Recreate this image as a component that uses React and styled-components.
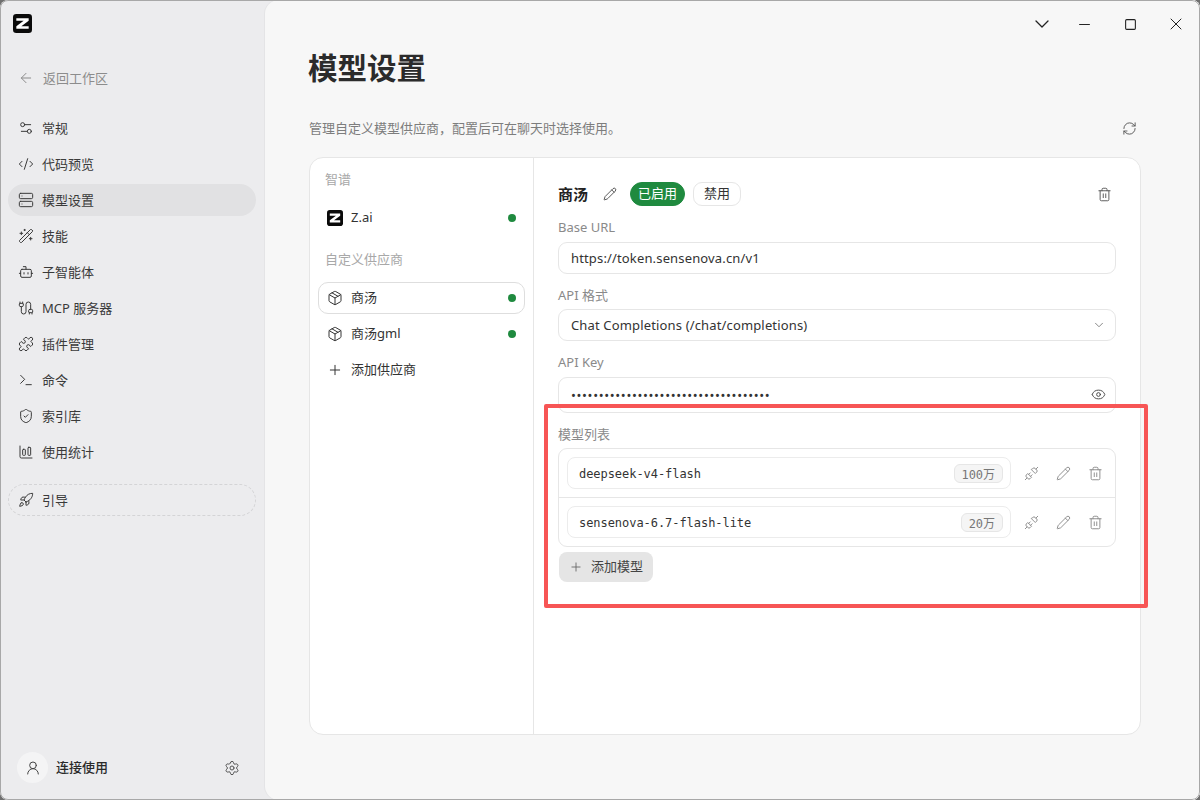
import React from 'react'
import styled, { createGlobalStyle } from 'styled-components'
import {
  ArrowLeft, Settings2, CodeXml, Server, WandSparkles, Bot, Cable, Puzzle, Terminal,
  ShieldCheck, ChartColumnBig, Rocket, UserRound, Settings, ChevronDown, Minus, Square, X,
  RefreshCw, Package, Plus, Pencil, Trash2, Eye, Unplug,
} from 'lucide-react'

const SANS = `"Noto Sans", "Noto Sans CJK SC", sans-serif`
const MONO = `"DejaVu Sans Mono", "Noto Sans CJK SC", monospace`

const GlobalStyle = createGlobalStyle`
  html, body { margin: 0; padding: 0; background: #6f6f6f; }
  * { box-sizing: border-box; }
  body { font-family: ${SANS}; font-size: 13px; color: #333; }
`

const Frame = styled.div`
  position: relative;
  display: flex;
  width: 1200px;
  height: 800px;
  overflow: hidden;
  border-radius: 8px;
  background: #ececee;
  &::after {
    content: '';
    position: absolute;
    inset: 0;
    border: 1px solid #a8a8a8;
    border-radius: 8px;
    pointer-events: none;
  }
`

const Sidebar = styled.aside`
  display: flex;
  flex-direction: column;
  flex: none;
  width: 265px;
  padding: 14px 9px 17px 8px;
`

const Logo = styled.svg`
  display: block;
  flex: none;
  width: ${p => p.$size}px;
  height: ${p => p.$size}px;
`

const LogoSlot = styled.div`
  height: 48px;
  padding-left: 5px;
`

// text sits a little high in its row in the reference
const Label = styled.span`
  padding-bottom: 2px;
`

const BackRow = styled.div`
  display: flex;
  align-items: center;
  gap: 9px;
  height: 32px;
  padding-left: 10px;
  color: #8c8c8c;
  margin-bottom: 18px;
`

const Nav = styled.nav`
  display: flex;
  flex-direction: column;
  gap: 4px;
`

const NavItem = styled.div`
  display: flex;
  align-items: center;
  gap: 8px;
  height: 32px;
  padding-left: 10px;
  border-radius: 16px;
  color: #3a3a3a;
  background: ${p => (p.$active ? '#e1e1e3' : 'transparent')};
`

const GuideItem = styled(NavItem)`
  margin-top: 16px;
  border: 1px dashed #d4d4d6;
  padding-left: 9px;
  height: 32px;
`

const UserBar = styled.div`
  display: flex;
  align-items: center;
  margin-top: auto;
  padding: 0 16px 0 9px;
`

const Avatar = styled.div`
  display: flex;
  align-items: center;
  justify-content: center;
  width: 31px;
  height: 31px;
  border-radius: 50%;
  background: #f4f4f5;
  color: #444;
`

const UserName = styled(Label)`
  margin-left: 8px;
  flex: 1;
  font-weight: 500;
  color: #2a2a2a;
`

const Main = styled.main`
  display: flex;
  flex-direction: column;
  flex: 1;
  min-width: 0;
  padding: 0 59px 65px 44px;
  background: #f7f7f7;
  border-radius: 14px 0 0 14px;
  box-shadow: -1px 0 0 #e4e4e6;
`

const TitleBar = styled.div`
  display: flex;
  align-items: center;
  justify-content: flex-end;
  height: 46px;
  margin-right: -59px;
  padding: 2px 1px 0 0;
  color: #222;
`

const WinButton = styled.div`
  display: flex;
  align-items: center;
  justify-content: center;
  width: ${p => p.$w || 46}px;
  height: 44px;
`

const Title = styled.h1`
  margin: 0 0 0 -1px;
  font-size: 29.5px;
  line-height: 44px;
  font-weight: 700;
  color: #2b2b2b;
`

const SubRow = styled.div`
  display: flex;
  align-items: center;
  justify-content: space-between;
  height: 20px;
  margin-top: 28px;
  padding-right: 4px;
  color: #7d7d7d;
`

const Card = styled.section`
  display: flex;
  flex: 1;
  margin-top: 19px;
  background: #fff;
  border: 1px solid #e6e6e6;
  border-radius: 14px;
  overflow: hidden;
`

const ProviderCol = styled.div`
  flex: none;
  width: 224px;
  padding: 12px 8px;
  border-right: 1px solid #e6e6e6;
`

const GroupLabel = styled.div`
  padding-left: 7px;
  line-height: 19.5px;
  color: #a8a8a8;
  margin-bottom: ${p => p.$gap}px;
  margin-top: ${p => p.$top || 0}px;
`

const ProviderRow = styled.div`
  display: flex;
  align-items: center;
  gap: 8px;
  height: 32px;
  padding: 0 8px;
  border-radius: 10px;
  color: #333;
  border: 1px solid ${p => (p.$active ? '#dedede' : 'transparent')};
`

const ProviderName = styled(Label)`
  flex: 1;
`

const ProviderList = styled.div`
  display: flex;
  flex-direction: column;
  gap: 4px;
  ${ProviderName} {
    padding-bottom: 4px;
  }
`

const Dot = styled.span`
  width: 8px;
  height: 8px;
  border-radius: 50%;
  background: #1f8a3f;
`

const DetailCol = styled.div`
  flex: 1;
  min-width: 0;
  padding: 24px 24px 0;
`

const DetailHead = styled.div`
  display: flex;
  align-items: center;
  height: 24px;
  margin-bottom: 12px;
`

const DetailName = styled.h2`
  flex: none;
  margin: 0 15px 0 0;
  padding-bottom: 2px;
  font-size: 15px;
  font-weight: 700;
  white-space: nowrap;
  color: #222;
`

const StatusPill = styled.div`
  display: flex;
  align-items: center;
  justify-content: center;
  flex: none;
  width: ${p => p.$w}px;
  height: 24px;
  margin-left: ${p => p.$left}px;
  padding-bottom: 3px;
  border-radius: ${p => (p.$on ? 12 : 9)}px;
  font-size: 13px;
  color: ${p => (p.$on ? '#fff' : '#333')};
  background: ${p => (p.$on ? '#1f8a3f' : '#fff')};
  border: 1px solid ${p => (p.$on ? '#1f8a3f' : '#e6e6e6')};
`

const IconAction = styled.div`
  display: flex;
  align-items: center;
  justify-content: center;
  width: 32px;
  height: 32px;
  color: ${p => p.$color || '#8a8a8a'};
`

const HeadTrash = styled(IconAction)`
  margin: 0 -4px 0 auto;
`

const FieldLabel = styled.div`
  line-height: 19.5px;
  margin-bottom: 4px;
  color: #8a8a8a;
`

const Field = styled.div`
  display: flex;
  align-items: center;
  justify-content: space-between;
  height: ${p => p.$h || 32}px;
  margin-bottom: 12px;
  padding: 0 9px 0 12px;
  border: 1px solid #e6e6e6;
  border-radius: 9px;
  letter-spacing: 0.15px;
  color: #333;
`

const Dots = styled.span`
  font-size: 13px;
  letter-spacing: 0.65px;
  color: #333;
`

const ModelList = styled.div`
  border: 1px solid #e6e6e6;
  border-radius: 9px;
`

const ModelRow = styled.div`
  display: flex;
  align-items: center;
  gap: 4px;
  padding: 8px 4px 8px 8px;
  & + & {
    border-top: 1px solid #e6e6e6;
  }
`

const ModelInput = styled.div`
  display: flex;
  align-items: center;
  justify-content: space-between;
  flex: 1;
  height: 32px;
  padding: 0 7px 0 11px;
  border: 1px solid #ececec;
  border-radius: 8px;
  font-family: ${MONO};
  font-size: 12px;
  letter-spacing: -0.05px;
  color: #333;
`

const ModelName = styled.span`
  padding-top: 2px;
`

const TokenTag = styled.span`
  display: flex;
  align-items: center;
  height: 19px;
  padding: 0 7px;
  border-radius: 6px;
  background: #f5f5f5;
  border: 1px solid #e6e6e6;
  color: #777;
`

const Actions = styled.div`
  display: flex;
  flex: none;
`

const AddButton = styled.div`
  display: flex;
  align-items: center;
  gap: 8px;
  width: 94px;
  height: 30px;
  margin: 4.5px 0 0 1px;
  padding-left: 10px;
  border-radius: 8px;
  background: #e5e5e5;
  color: #444;
`

const Annotation = styled.div`
  position: absolute;
  left: 544px;
  top: 404px;
  width: 604px;
  height: 204px;
  border: 4px solid #f75555;
  border-radius: 2px;
  pointer-events: none;
`

const ZLogo = ({ size }) => (
  <Logo $size={size} viewBox="0 0 20 20">
    <rect width="20" height="20" rx="3.5" fill="#0a0a0a" />
    <polygon points="3.5,4.5 16.5,4.5 16.5,7.2 8.8,12.8 16.5,12.8 16.5,15.5 3.5,15.5 3.5,12.8 11.2,7.2 3.5,7.2" fill="#fff" />
  </Logo>
)

const navItems = [
  [Settings2, '常规'],
  [CodeXml, '代码预览'],
  [Server, '模型设置', true],
  [WandSparkles, '技能'],
  [Bot, '子智能体'],
  [Cable, 'MCP 服务器'],
  [Puzzle, '插件管理'],
  [Terminal, '命令'],
  [ShieldCheck, '索引库'],
  [ChartColumnBig, '使用统计'],
]

const models = [
  ['deepseek-v4-flash', '100万'],
  ['sensenova-6.7-flash-lite', '20万'],
]

const STROKE = 1.5

export default function App() {
  return (
    <Frame>
      <GlobalStyle />
      <Sidebar>
        <LogoSlot><ZLogo size={19} /></LogoSlot>
        <BackRow><ArrowLeft size={16} strokeWidth={STROKE} /><Label>返回工作区</Label></BackRow>
        <Nav>
          {navItems.map(([Icon, label, active]) => (
            <NavItem key={label} $active={active}>
              <Icon size={16} strokeWidth={STROKE} />
              <Label>{label}</Label>
            </NavItem>
          ))}
        </Nav>
        <GuideItem><Rocket size={16} strokeWidth={STROKE} /><Label>引导</Label></GuideItem>
        <UserBar>
          <Avatar><UserRound size={16} strokeWidth={STROKE} /></Avatar>
          <UserName>连接使用</UserName>
          <Settings size={16} strokeWidth={STROKE} color="#555" />
        </UserBar>
      </Sidebar>

      <Main>
        <TitleBar>
          <WinButton $w={38}><ChevronDown size={24} strokeWidth={1.3} /></WinButton>
          <WinButton><Minus size={17} strokeWidth={1.4} /></WinButton>
          <WinButton><Square size={13} strokeWidth={2} /></WinButton>
          <WinButton><X size={20} strokeWidth={1.2} /></WinButton>
        </TitleBar>
        <Title>模型设置</Title>
        <SubRow>
          <Label>管理自定义模型供应商，配置后可在聊天时选择使用。</Label>
          <RefreshCw size={15} strokeWidth={STROKE} color="#555" />
        </SubRow>
        <Card>
          <ProviderCol>
            <GroupLabel $gap={12}>智谱</GroupLabel>
            <ProviderRow>
              <ZLogo size={16} />
              <ProviderName>Z.ai</ProviderName>
              <Dot />
            </ProviderRow>
            <GroupLabel $top={16} $gap={13}>自定义供应商</GroupLabel>
            <ProviderList>
              <ProviderRow $active>
                <Package size={16} strokeWidth={STROKE} />
                <ProviderName>商汤</ProviderName>
                <Dot />
              </ProviderRow>
              <ProviderRow>
                <Package size={16} strokeWidth={STROKE} />
                <ProviderName>商汤gml</ProviderName>
                <Dot />
              </ProviderRow>
              <ProviderRow>
                <Plus size={16} strokeWidth={STROKE} />
                <ProviderName>添加供应商</ProviderName>
              </ProviderRow>
            </ProviderList>
          </ProviderCol>

          <DetailCol>
            <DetailHead>
              <DetailName>商汤</DetailName>
              <Pencil size={14} strokeWidth={STROKE} color="#444" />
              <StatusPill $on $w={55} $left={13}>已启用</StatusPill>
              <StatusPill $w={48} $left={8}>禁用</StatusPill>
              <HeadTrash $color="#555"><Trash2 size={15} strokeWidth={STROKE} /></HeadTrash>
            </DetailHead>

            <FieldLabel>Base URL</FieldLabel>
            <Field>https://token.sensenova.cn/v1</Field>

            <FieldLabel>API 格式</FieldLabel>
            <Field>
              Chat Completions (/chat/completions)
              <ChevronDown size={14} strokeWidth={STROKE} color="#777" />
            </Field>

            <FieldLabel>API Key</FieldLabel>
            <Field $h={36}>
              <Dots>••••••••••••••••••••••••••••••••••••</Dots>
              <Eye size={15} strokeWidth={STROKE} color="#444" />
            </Field>

            <FieldLabel>模型列表</FieldLabel>
            <ModelList>
              {models.map(([name, limit]) => (
                <ModelRow key={name}>
                  <ModelInput>
                    <ModelName>{name}</ModelName>
                    <TokenTag>{limit}</TokenTag>
                  </ModelInput>
                  <Actions>
                    <IconAction><Unplug size={15} strokeWidth={STROKE} /></IconAction>
                    <IconAction><Pencil size={15} strokeWidth={STROKE} /></IconAction>
                    <IconAction><Trash2 size={15} strokeWidth={STROKE} /></IconAction>
                  </Actions>
                </ModelRow>
              ))}
            </ModelList>
            <AddButton><Plus size={14} strokeWidth={STROKE} color="#666" /><Label>添加模型</Label></AddButton>
          </DetailCol>
        </Card>
      </Main>
      <Annotation />
    </Frame>
  )
}
